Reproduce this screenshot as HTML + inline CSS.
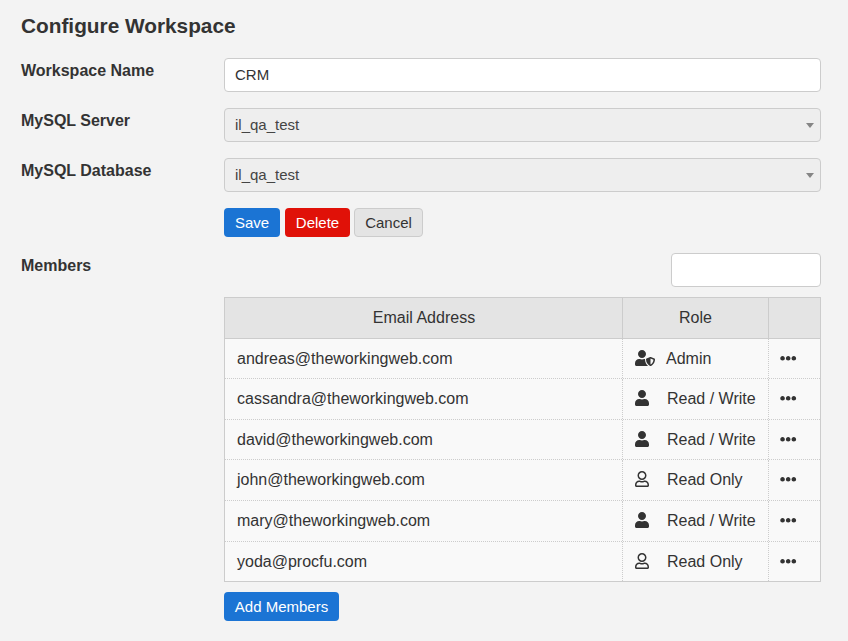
<!DOCTYPE html>
<html><head><meta charset="utf-8">
<style>
*{box-sizing:border-box}
html,body{margin:0;padding:0}
body{width:848px;height:641px;background:#f3f3f3;font-family:"Liberation Sans",Arial,sans-serif;color:#333;font-size:16px;position:relative;overflow:hidden}
h1{position:absolute;left:21px;top:14px;margin:0;font-size:20.8px;font-weight:bold;line-height:24px;color:#333}
.lbl{position:absolute;left:21px;font-weight:bold;font-size:16px;line-height:20px;color:#333}
.inp{position:absolute;left:224px;width:597px;height:34px;border:1px solid #ccc;border-radius:4px;background:#fff;padding:0 10px;font-size:15px;line-height:32px;color:#333}
.sel{background:#eee;color:#444}
.sel:after{content:"";position:absolute;right:6px;top:14px;border-left:4px solid transparent;border-right:4px solid transparent;border-top:5px solid #858585}
.btn{position:absolute;top:208px;height:29px;border-radius:4px;color:#fff;font-size:15px;line-height:29px;text-align:center}
.blue{background:#1b74d4}
.red{background:#e01108}
.grey{background:#e4e4e4;color:#333;border:1px solid #ccc;line-height:27px}
.tbl{position:absolute;left:224px;top:297px;width:597px;height:285px;border:1px solid #ccc;background:#f9f9f9}
.hd{position:absolute;left:224px;top:297px;width:597px;height:42px;background:#e4e4e4;border:1px solid #ccc}
.hd div{position:absolute;top:0;height:40px;line-height:40px;text-align:center}
.hd .h1{left:0;width:398px}
.hd .h2{left:397px;width:147px;border-left:1px solid #ccc;border-right:1px solid #ccc}
.row{position:absolute;left:225px;width:595px;border-top:1px dotted #ccc}
.row.first{border-top:1px solid transparent}
.c{position:absolute;top:0;bottom:0}
.c span{position:absolute;top:50%;margin-top:-10px;line-height:20px;white-space:nowrap}
.c1{left:0;width:397px} .c1 span{left:12px}
.c2{left:397px;width:147px;border-left:1px dotted #ccc;border-right:1px dotted #ccc} .c2 span{left:44px} .c2 span.a{left:43px}
.c3{left:544px;width:51px}
.ic{position:absolute;left:12px;top:50%;margin-top:-9px;height:16px;fill:#333}
.el{position:absolute;left:11.4px;top:50%;margin-top:-8.8px;width:16.4px;height:16.4px;fill:#333}
</style></head><body>
<h1>Configure Workspace</h1>
<div class="lbl" style="top:61px">Workspace Name</div>
<div class="inp" style="top:58px">CRM</div>
<div class="lbl" style="top:111px">MySQL Server</div>
<div class="inp sel" style="top:108px">il_qa_test</div>
<div class="lbl" style="top:161px">MySQL Database</div>
<div class="inp sel" style="top:158px">il_qa_test</div>
<div class="btn blue" style="left:224px;width:56px">Save</div>
<div class="btn red" style="left:285px;width:65px">Delete</div>
<div class="btn grey" style="left:354px;width:69px">Cancel</div>
<div class="lbl" style="top:256px">Members</div>
<div class="inp" style="left:671px;width:150px;top:253px"></div>
<div class="tbl"></div>
<div class="hd"><div class="h1">Email Address</div><div class="h2">Role</div></div>
<div class="row first" style="top:338px;height:40px"><div class="c c1"><span>andreas@theworkingweb.com</span></div><div class="c c2"><svg class="ic" style="width:20px" viewBox="0 0 640 512"><path d="M622.300 271.100l-115.200-45c-4.100-1.600-12.600-3.700-22.200 0l-115.200 45c-10.700 4.200-17.700 14-17.700 24.900 0 111.600 68.700 188.800 132.900 213.900 9.600 3.700 18 1.600 22.200 0C558.400 489.900 640 420.500 640 296c0-10.900-7-20.700-17.700-24.900zM496 462.400V273.300l95.500 37.300c-5.600 87.100-60.900 135.400-95.500 151.800zM224 256c70.700 0 128-57.300 128-128S294.700 0 224 0 96 57.300 96 128s57.300 128 128 128zm96 40c0-2.500.8-4.800 1.100-7.200-2.500-.1-4.900-.8-7.500-.8h-16.700c-22.200 10.200-46.900 16-72.900 16s-50.600-5.800-72.900-16h-16.700C60.200 288 0 348.200 0 422.400V464c0 26.500 21.500 48 48 48h352c6.800 0 13.300-1.500 19.200-4-54-42.900-99.200-116.700-99.200-212z"/></svg><span class="a">Admin</span></div><div class="c c3"><svg class="el" viewBox="0 0 512 512"><path d="M328 256c0 39.800-32.200 72-72 72s-72-32.200-72-72 32.200-72 72-72 72 32.200 72 72zm104-72c-39.800 0-72 32.200-72 72s32.200 72 72 72 72-32.200 72-72-32.200-72-72-72zm-352 0c-39.800 0-72 32.200-72 72s32.200 72 72 72 72-32.200 72-72-32.200-72-72-72z"/></svg></div></div>
<div class="row" style="top:378px;height:41px"><div class="c c1"><span>cassandra@theworkingweb.com</span></div><div class="c c2"><svg class="ic" style="width:14px" viewBox="0 0 448 512"><path d="M224 256c70.700 0 128-57.300 128-128S294.700 0 224 0 96 57.300 96 128s57.300 128 128 128zm89.600 32h-16.700c-22.200 10.200-46.900 16-72.900 16s-50.600-5.800-72.900-16h-16.700C60.200 288 0 348.200 0 422.400V464c0 26.500 21.500 48 48 48h352c26.500 0 48-21.500 48-48v-41.600c0-74.200-60.200-134.400-134.400-134.400z"/></svg><span class="u">Read / Write</span></div><div class="c c3"><svg class="el" viewBox="0 0 512 512"><path d="M328 256c0 39.800-32.200 72-72 72s-72-32.200-72-72 32.200-72 72-72 72 32.200 72 72zm104-72c-39.800 0-72 32.200-72 72s32.200 72 72 72 72-32.200 72-72-32.200-72-72-72zm-352 0c-39.800 0-72 32.200-72 72s32.200 72 72 72 72-32.200 72-72-32.200-72-72-72z"/></svg></div></div>
<div class="row" style="top:419px;height:40px"><div class="c c1"><span>david@theworkingweb.com</span></div><div class="c c2"><svg class="ic" style="width:14px" viewBox="0 0 448 512"><path d="M224 256c70.700 0 128-57.300 128-128S294.700 0 224 0 96 57.300 96 128s57.300 128 128 128zm89.600 32h-16.700c-22.200 10.200-46.900 16-72.900 16s-50.600-5.800-72.900-16h-16.700C60.200 288 0 348.200 0 422.400V464c0 26.500 21.500 48 48 48h352c26.500 0 48-21.500 48-48v-41.600c0-74.200-60.200-134.400-134.400-134.400z"/></svg><span class="u">Read / Write</span></div><div class="c c3"><svg class="el" viewBox="0 0 512 512"><path d="M328 256c0 39.800-32.200 72-72 72s-72-32.200-72-72 32.200-72 72-72 72 32.200 72 72zm104-72c-39.800 0-72 32.200-72 72s32.200 72 72 72 72-32.200 72-72-32.200-72-72-72zm-352 0c-39.800 0-72 32.200-72 72s32.200 72 72 72 72-32.200 72-72-32.200-72-72-72z"/></svg></div></div>
<div class="row" style="top:459px;height:41px"><div class="c c1"><span>john@theworkingweb.com</span></div><div class="c c2"><svg class="ic" style="width:14px" viewBox="0 0 448 512"><path d="M313.600 304c-28.700 0-42.500 16-89.600 16-47.100 0-60.800-16-89.600-16C60.200 304 0 364.200 0 438.400V464c0 26.500 21.500 48 48 48h352c26.500 0 48-21.500 48-48v-25.600c0-74.200-60.200-134.400-134.400-134.400zM400 464H48v-25.600c0-47.600 38.800-86.400 86.400-86.400 14.600 0 38.300 16 89.600 16 51.700 0 74.900-16 89.600-16 47.600 0 86.400 38.800 86.400 86.400V464zM224 288c79.500 0 144-64.500 144-144S303.500 0 224 0 80 64.500 80 144s64.500 144 144 144zm0-240c52.900 0 96 43.100 96 96s-43.100 96-96 96-96-43.100-96-96 43.100-96 96-96z"/></svg><span class="u">Read Only</span></div><div class="c c3"><svg class="el" viewBox="0 0 512 512"><path d="M328 256c0 39.800-32.200 72-72 72s-72-32.200-72-72 32.200-72 72-72 72 32.200 72 72zm104-72c-39.800 0-72 32.200-72 72s32.200 72 72 72 72-32.200 72-72-32.200-72-72-72zm-352 0c-39.800 0-72 32.200-72 72s32.200 72 72 72 72-32.200 72-72-32.200-72-72-72z"/></svg></div></div>
<div class="row" style="top:500px;height:41px"><div class="c c1"><span>mary@theworkingweb.com</span></div><div class="c c2"><svg class="ic" style="width:14px" viewBox="0 0 448 512"><path d="M224 256c70.700 0 128-57.300 128-128S294.700 0 224 0 96 57.300 96 128s57.300 128 128 128zm89.600 32h-16.700c-22.200 10.200-46.900 16-72.900 16s-50.600-5.800-72.900-16h-16.700C60.200 288 0 348.200 0 422.400V464c0 26.500 21.500 48 48 48h352c26.500 0 48-21.500 48-48v-41.600c0-74.200-60.200-134.400-134.400-134.400z"/></svg><span class="u">Read / Write</span></div><div class="c c3"><svg class="el" viewBox="0 0 512 512"><path d="M328 256c0 39.800-32.200 72-72 72s-72-32.200-72-72 32.200-72 72-72 72 32.200 72 72zm104-72c-39.800 0-72 32.200-72 72s32.200 72 72 72 72-32.200 72-72-32.200-72-72-72zm-352 0c-39.800 0-72 32.200-72 72s32.200 72 72 72 72-32.200 72-72-32.200-72-72-72z"/></svg></div></div>
<div class="row" style="top:541px;height:40px"><div class="c c1"><span>yoda@procfu.com</span></div><div class="c c2"><svg class="ic" style="width:14px" viewBox="0 0 448 512"><path d="M313.600 304c-28.700 0-42.500 16-89.600 16-47.100 0-60.800-16-89.600-16C60.200 304 0 364.200 0 438.400V464c0 26.500 21.500 48 48 48h352c26.500 0 48-21.500 48-48v-25.600c0-74.200-60.200-134.400-134.400-134.400zM400 464H48v-25.600c0-47.600 38.800-86.400 86.400-86.400 14.600 0 38.300 16 89.600 16 51.700 0 74.900-16 89.600-16 47.600 0 86.400 38.800 86.400 86.400V464zM224 288c79.500 0 144-64.500 144-144S303.500 0 224 0 80 64.500 80 144s64.500 144 144 144zm0-240c52.900 0 96 43.100 96 96s-43.100 96-96 96-96-43.100-96-96 43.100-96 96-96z"/></svg><span class="u">Read Only</span></div><div class="c c3"><svg class="el" viewBox="0 0 512 512"><path d="M328 256c0 39.800-32.200 72-72 72s-72-32.200-72-72 32.200-72 72-72 72 32.200 72 72zm104-72c-39.800 0-72 32.200-72 72s32.200 72 72 72 72-32.200 72-72-32.200-72-72-72zm-352 0c-39.800 0-72 32.200-72 72s32.200 72 72 72 72-32.200 72-72-32.200-72-72-72z"/></svg></div></div>
<div class="btn blue" style="left:224px;top:592px;width:115px">Add Members</div>
</body></html>
